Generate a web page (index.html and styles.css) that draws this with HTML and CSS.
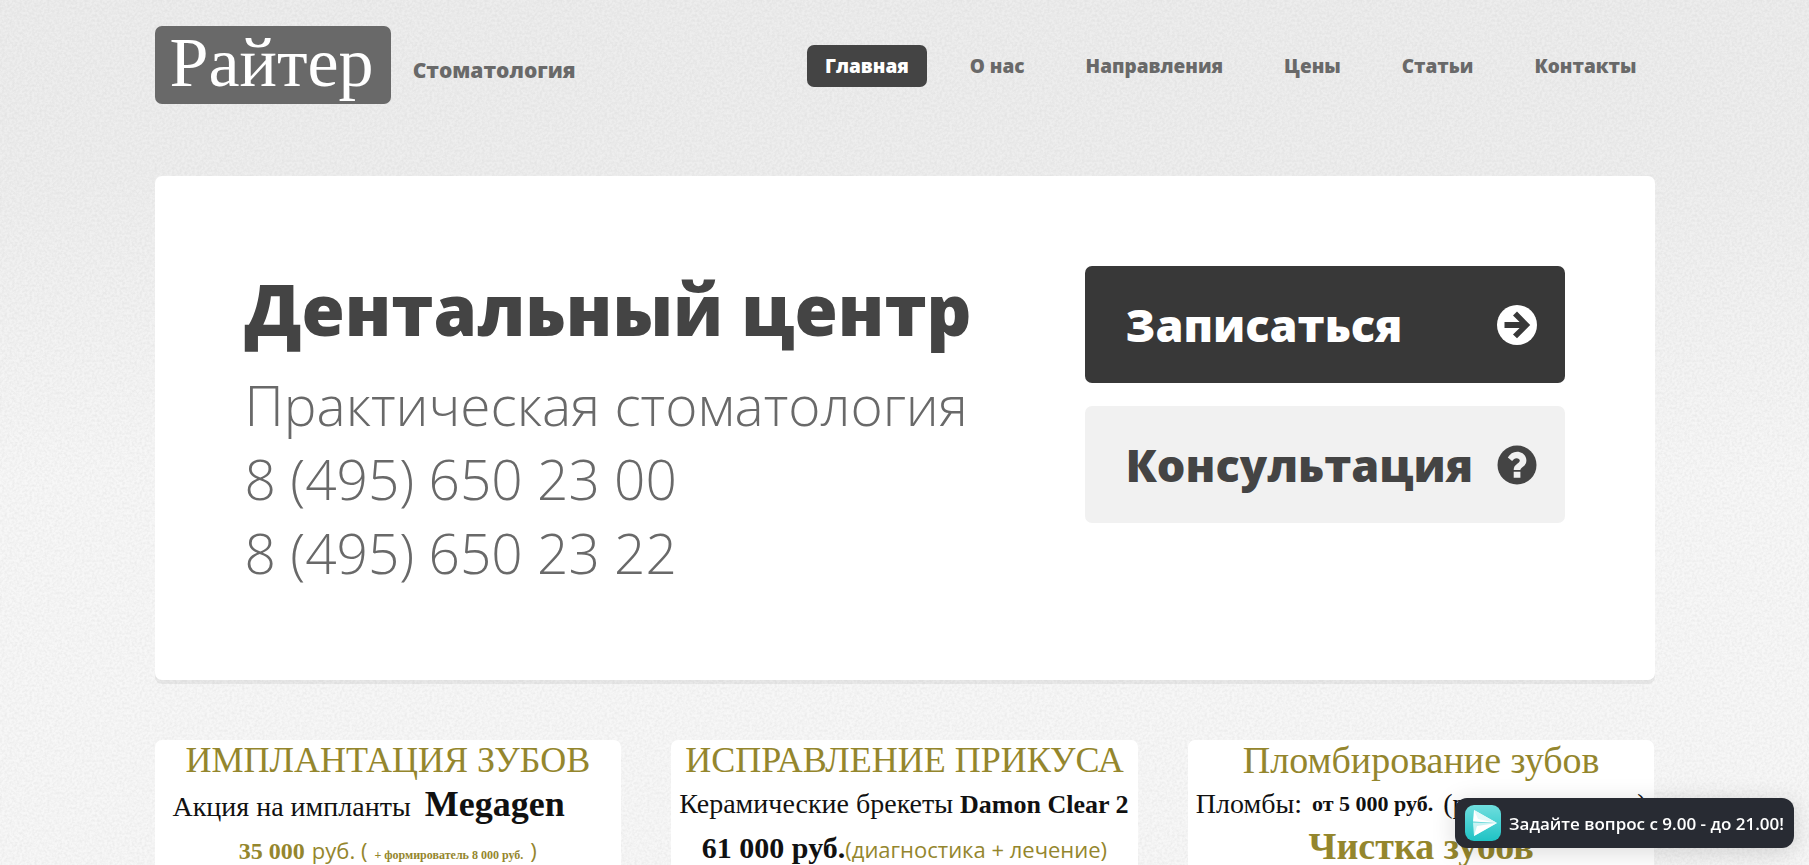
FILE: index.html
```html
<!DOCTYPE html>
<html lang="ru">
<head>
    <meta charset="UTF-8">
    <meta name="viewport" content="width=device-width, initial-scale=1.0">
    <title>Райтер - Стоматология</title>
    <link rel="stylesheet" href="styles.css">
</head>
<body>
    <div class="container">
        <header class="header">
            <div class="logo">
                <h1><a href="#">Райтер</a></h1>
                <span>Стоматология</span>
            </div>
            <nav class="nav">
                <a href="#" class="current">Главная</a>
                <a href="#">О нас</a>
                <a href="#">Направления</a>
                <a href="#">Цены</a>
                <a href="#">Статьи</a>
                <a href="#">Контакты</a>
            </nav>
        </header>

        <section class="banner">
            <div class="banner-text">
                <h2>Дентальный центр</h2>
                <p>Практическая стоматология<br>8 (495) 650 23 00<br>8 (495) 650 23 22</p>
            </div>
            <div class="banner-buttons">
                <a href="#" class="button">
                    Записаться
                    <svg class="icon" viewBox="0 0 40 40" aria-hidden="true">
                        <circle cx="20" cy="20" r="20" fill="#fff"/>
                        <path d="M20 6.500L33.200 20 20 33.300 16 29.500 22.600 23H7.500V17H22.600L16 10.400Z" fill="#383838"/>
                    </svg>
                </a>
                <a href="#" class="button alt">
                    Консультация
                    <svg class="icon" viewBox="0 0 40 40" aria-hidden="true">
                        <circle cx="20" cy="20" r="19.500" fill="#444"/>
                        <path d="M16.700 26.800h6.700v6h-6.700zM16.700 24.900h6.700c0-2.500 6-3.600 6-9.400 0-5.500-4.600-8.800-9.300-8.800-4.100 0-7.200 2.300-9.300 5.800l4.300 3.600c1.400-1.900 2.500-2.900 4.500-2.900 1.800 0 3.200 1 3.200 2.400 0 3-6.100 3.600-6.100 9.300z" fill="#f1f1f1"/>
                    </svg>
                </a>
            </div>
        </section>

        <section class="offers">
            <article class="offer">
                <h3 class="caps">ИМПЛАНТАЦИЯ ЗУБОВ</h3>
                <p class="row wide">Акция на импланты&nbsp; <strong class="brand">Megagen</strong></p>
                <p class="price gold"><b>35 000</b> <span class="sans">руб. (</span> <b class="small">+ формирователь 8 000 руб.</b> <span class="sans">)</span></p>
            </article>
            <article class="offer">
                <h3 class="caps">ИСПРАВЛЕНИЕ ПРИКУСА</h3>
                <p class="row">Керамические брекеты <strong>Damon Clear 2</strong></p>
                <p class="price"><b class="big">61 000 руб.</b><span class="sans gold">(диагностика + лечение)</span></p>
            </article>
            <article class="offer">
                <h3>Пломбирование зубов</h3>
                <p class="row fill"><span>Пломбы:</span><b>от 5 000 руб.</b><span>(р</span><span class="end">)</span></p>
                <h3 class="bold">Чистка зубов</h3>
            </article>
        </section>
    </div>

    <button type="button" class="chat">
        <svg viewBox="0 0 36 36" aria-hidden="true">
            <defs>
                <linearGradient id="teal" x1="0" y1="0" x2="0" y2="1">
                    <stop offset="0" stop-color="#6fdede"/>
                    <stop offset="1" stop-color="#1fc3c5"/>
                </linearGradient>
            </defs>
            <rect width="36" height="36" rx="9" fill="url(#teal)"/>
            <path d="M9 5L32 18 8 16.500Z" fill="#fff"/>
            <path d="M9 5L32 18 13 14Z" fill="#e3f9f9"/>
            <path d="M8 17.500L32 18 9 31Z" fill="#c9f3f3"/>
            <path d="M12 21L32 18 9 31Z" fill="#fff"/>
        </svg>
        Задайте вопрос с 9.00 - до 21.00!
    </button>
</body>
</html>
```

FILE: styles.css
```css
* {
    box-sizing: border-box;
}
body {
    margin: 0;
    font-family: "Open Sans", sans-serif;
    font-size: 18px;
    color: #696969;
    /* grain tile over a soft grey fade */
    background-color: #f7f7f7;
    background-image:
        url("data:image/svg+xml,%3Csvg xmlns='http://www.w3.org/2000/svg' width='200' height='200'%3E%3Cfilter id='n'%3E%3CfeTurbulence type='fractalNoise' baseFrequency='0.4' numOctaves='2' stitchTiles='stitch'/%3E%3CfeColorMatrix values='0 0 0 0 0 0 0 0 0 0 0 0 0 0 0 0.09 0 0 0 -0.03'/%3E%3C/filter%3E%3Crect width='200' height='200' filter='url(%23n)'/%3E%3C/svg%3E"),
        linear-gradient(#ededed, #eeeeee 170px, #f7f7f7 480px);
    background-repeat: repeat, no-repeat;
}
h1, h2, h3, p {
    margin: 0;
}
a {
    color: inherit;
    text-decoration: none;
}
.container {
    max-width: 1500px;
    margin: 0 auto;
}

/* Header */
.header {
    display: flex;
    justify-content: space-between;
    align-items: flex-start;
    padding: 26px 0 72px;
}
.logo {
    display: flex;
    align-items: center;
    gap: 22px;
}
.logo h1 {
    padding: 0 17px 4px 15px;
    background: #696969;
    border-radius: 7px;
    color: #fff;
    font-family: "Liberation Serif", serif;
    font-size: 70px;
    font-weight: 400;
    line-height: 74px;
}
.logo span {
    padding-top: 10px;
    font-size: 21px;
    font-weight: 800;
}
.nav {
    display: flex;
    gap: 25px;
    padding-top: 19px;
}
.nav a {
    padding: 0 18px;
    border-radius: 7px;
    font-size: 19px;
    font-weight: 800;
    line-height: 42px;
}
.nav .current {
    background: #444;
    color: #fff;
}

/* Banner */
.banner {
    display: flex;
    justify-content: space-between;
    align-items: flex-start;
    padding: 90px;
    background: #fff;
    border-radius: 7px;
    box-shadow: 0 4px 0 rgba(0, 0, 0, 0.06);
}
.banner h2 {
    color: #444;
    font-size: 70px;
    font-weight: 800;
    line-height: 86px;
}
.banner p {
    padding-top: 16px;
    font-size: 55px;
    font-weight: 300;
    line-height: 74px;
}
.banner-buttons {
    display: flex;
    flex-direction: column;
    gap: 23px;
    width: 480px;
}
.button {
    display: flex;
    justify-content: space-between;
    align-items: center;
    padding: 0 28px 0 41px;
    background: #383838;
    border-radius: 7px;
    color: #fff;
    font-size: 45px;
    font-weight: 800;
    line-height: 117px;
}
.button.alt {
    background: #f1f1f1;
    color: #444;
}
.icon {
    width: 40px;
    height: 40px;
}

/* Offers */
.offers {
    display: grid;
    grid-template-columns: repeat(3, 1fr);
    gap: 50px;
    padding: 60px 0;
}
.offer {
    height: 280px;
    background: #fff;
    border-radius: 7px;
    color: #111;
    font-family: "Liberation Serif", serif;
    font-size: 28px;
    text-align: center;
    white-space: nowrap;
}
.offer h3 {
    color: #94862d;
    font-size: 38px;
    font-weight: 400;
    line-height: 40px;
}
.offer h3.caps {
    font-size: 36px;
}
.offer h3.bold {
    font-weight: 700;
}
.row {
    padding: 2px 8px 0;
    line-height: 44px;
    text-align: left;
}
.row.wide {
    padding: 2px 18px 0;
}
.row strong {
    font-size: 26px;
}
.row .brand {
    font-size: 36px;
}
.price {
    line-height: 42px;
}
.price b {
    font-size: 24px;
}
.price .big {
    font-size: 30px;
}
.gold {
    color: #94862d;
}
.sans {
    font-family: "Open Sans", sans-serif;
    font-size: 22px;
}
.price .small {
    font-size: 12px;
}
.fill {
    display: flex;
    gap: 10px;
}
.fill b {
    font-size: 22px;
}
.end {
    margin-left: auto;
}

/* Chat */
.chat {
    position: fixed;
    right: 15px;
    bottom: 17px;
    display: flex;
    align-items: center;
    gap: 8px;
    height: 50px;
    padding: 0 10px;
    background: #282b33;
    border: none;
    border-radius: 12px;
    box-shadow: 0 4px 24px rgba(0, 0, 0, 0.15);
    color: #fff;
    font-family: "Open Sans", sans-serif;
    font-size: 17px;
    font-weight: 600;
    cursor: pointer;
}
.chat svg {
    width: 36px;
    height: 36px;
}
```
